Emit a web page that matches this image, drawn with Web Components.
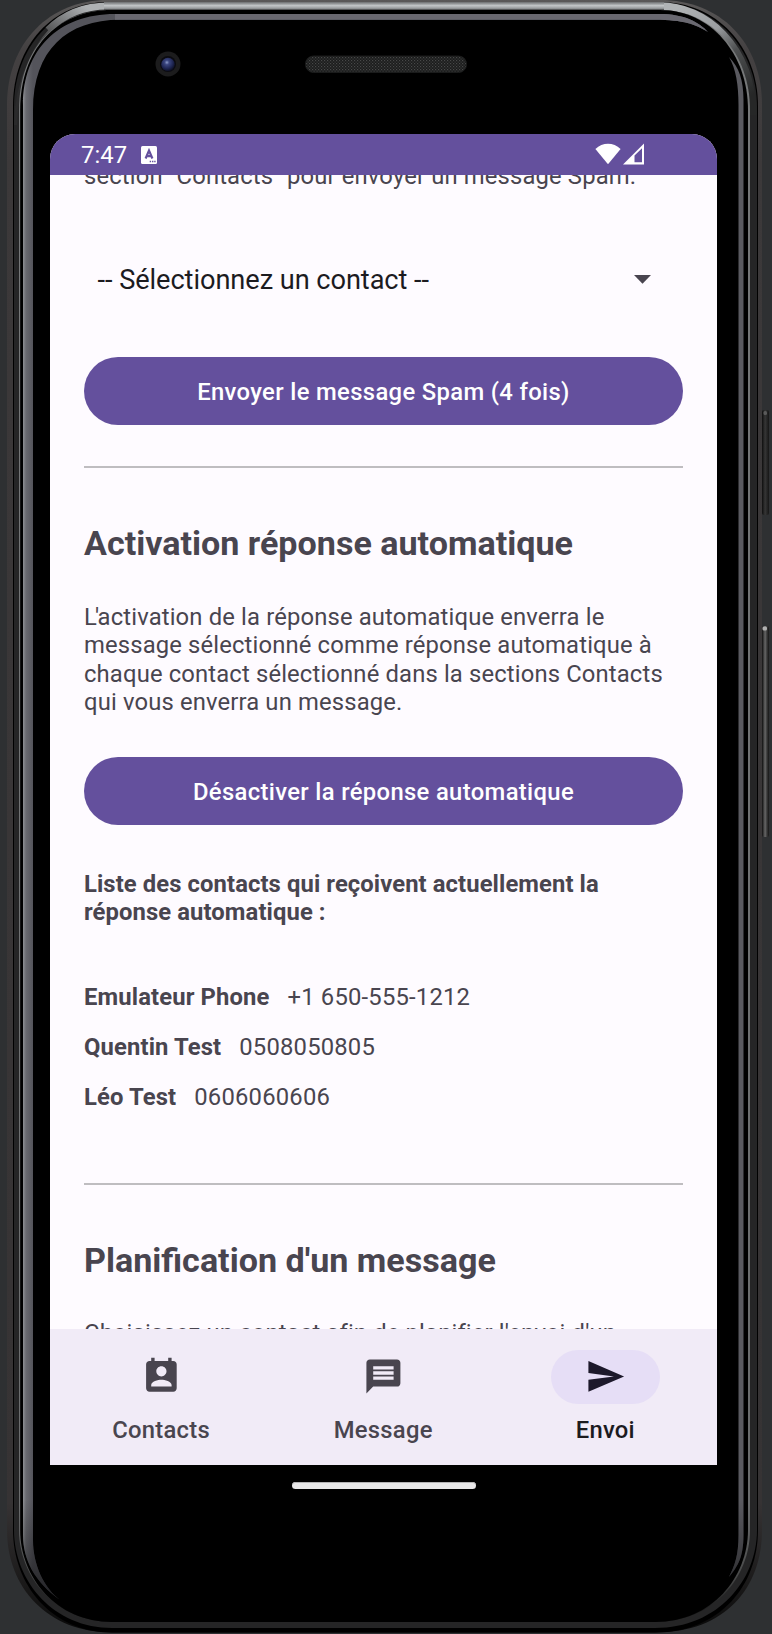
<!DOCTYPE html>
<html lang="fr">
<head>
<meta charset="utf-8">
<title>Envoi</title>
<style>
  html, body { margin: 0; background: #2e3032; }
  body { width: 772px; height: 1634px; overflow: hidden; font-family: Roboto, "Noto Sans", sans-serif; }
  .tight { letter-spacing: -1.7px; }
</style>
</head>
<body>
<phone-device>
  <status-bar slot="status" time="7:47"></status-bar>
  <scroll-page>
    <body-text class="intro">section "Contacts" pour envoyer un message Spam.</body-text>
    <contact-select>-- Sélectionnez un contact --</contact-select>
    <pill-button>Envoyer le message Spam (4 fois)</pill-button>
    <line-divider></line-divider>
    <page-heading>Activation réponse automatique</page-heading>
    <body-text class="para"><span class="tight">L'</span>activation de la réponse automatique enverra le<br>message sélectionné comme réponse automatique à<br>chaque contact sélectionné dans la sections Contacts<br>qui vous enverra un message.</body-text>
    <pill-button class="second">Désactiver la réponse automatique</pill-button>
    <body-text class="list" bold>Liste des contacts qui reçoivent actuellement la<br>réponse automatique :</body-text>
    <contact-row class="first" name="Emulateur Phone">+1 650-555-1212</contact-row>
    <contact-row name="Quentin Test">0508050805</contact-row>
    <contact-row name="Léo Test">0606060606</contact-row>
    <line-divider class="second"></line-divider>
    <page-heading>Planification d'un message</page-heading>
    <body-text class="para last">Choisissez un contact afin de planifier l'envoi d'un</body-text>
  </scroll-page>
  <nav-bar slot="nav">
    <nav-item icon="contacts">Contacts</nav-item>
    <nav-item icon="message">Message</nav-item>
    <nav-item icon="send" active>Envoi</nav-item>
  </nav-bar>
</phone-device>

<script>
const define = (name, html) => {
  const tpl = document.createElement('template');
  tpl.innerHTML = html;
  customElements.define(name, class extends HTMLElement {
    constructor() {
      super();
      this.attachShadow({ mode: 'open' }).append(tpl.content.cloneNode(true));
    }
    connectedCallback() {
      for (const el of this.shadowRoot.querySelectorAll('[data-attr]')) el.textContent = this.getAttribute(el.dataset.attr);
      const icon = this.shadowRoot.querySelector('[data-icon]');
      if (icon) icon.setAttribute('d', ICONS[this.getAttribute('icon')]);
    }
  });
};

const ICONS = {
  contacts: 'M19 3h-1V1h-2v2H8V1H6v2H5c-1.11 0-2 .9-2 2v14c0 1.1.89 2 2 2h14c1.1 0 2-.9 2-2V5c0-1.1-.9-2-2-2zm-7 3c1.66 0 3 1.34 3 3s-1.34 3-3 3-3-1.34-3-3 1.34-3 3-3zm6 12H6v-1c0-2 4-3.1 6-3.1s6 1.1 6 3.1v1z',
  message: 'M20 2H4c-1.1 0-1.99.9-1.99 2L2 22l4-4h14c1.1 0 2-.9 2-2V4c0-1.1-.9-2-2-2zm-2 12H6v-2h12v2zm0-3H6V9h12v2zm0-3H6V6h12v2z',
  send: 'M2.01 21L23 12 2.01 3 2 10l15 2-15 2z'
};

define('phone-device', `
<style>
  :host { display: block; position: relative; width: 772px; height: 1634px; }
  .shell { position: absolute; inset: 0; }
  .screen { position: relative; display: flex; flex-direction: column; padding: 134px 55px 0 50px; }
  .glass { display: flex; flex-direction: column; height: 1331px; border-radius: 25px 25px 0 0; overflow: hidden; background: #fefbff; }
  .home { align-self: center; width: 184px; height: 7px; margin: 17px 0 0; border-radius: 3.5px; background: #e9e8e9; box-shadow: inset 0 1px #b4b3b4; }
</style>
<svg class="shell" width="772" height="1634" viewBox="0 0 772 1634">
  <defs>
    <linearGradient id="edge" x1="0" x2="0" y1="0" y2="1634" gradientUnits="userSpaceOnUse">
      <stop offset="0" stop-color="#5a5858"/><stop offset=".03" stop-color="#444142"/><stop offset=".1" stop-color="#3c393a"/><stop offset=".92" stop-color="#363334"/><stop offset=".97" stop-color="#1a1919"/><stop offset="1" stop-color="#080808"/>
    </linearGradient>
    <linearGradient id="ring" x1="0" x2="0" y1="0" y2="1634" gradientUnits="userSpaceOnUse">
      <stop offset="0" stop-color="#77797a"/><stop offset=".92" stop-color="#6a6c6d"/><stop offset=".965" stop-color="#484949"/><stop offset=".985" stop-color="#1c1c1c"/><stop offset="1" stop-color="#141414"/>
    </linearGradient>
    <linearGradient id="metal" x1="0" x2="0" y1="2" y2="10" gradientUnits="userSpaceOnUse">
      <stop offset="0" stop-color="#6c6e6f"/><stop offset=".45" stop-color="#c2c5c7"/><stop offset=".8" stop-color="#96999b"/><stop offset="1" stop-color="#3a3b3c"/>
    </linearGradient>
    <linearGradient id="arcL" x1="18" y1="100" x2="85" y2="6" gradientUnits="userSpaceOnUse">
      <stop offset="0" stop-color="#2a2a2b"/><stop offset=".6" stop-color="#4b4b4c"/><stop offset=".85" stop-color="#8b8d8f"/><stop offset="1" stop-color="#aeb1b3"/>
    </linearGradient>
    <linearGradient id="arcR" x1="680" y1="6" x2="752" y2="95" gradientUnits="userSpaceOnUse">
      <stop offset="0" stop-color="#b0b3b5"/><stop offset=".35" stop-color="#9b9ea1"/><stop offset=".6" stop-color="#4e5051"/><stop offset="1" stop-color="#262727"/>
    </linearGradient>
    <linearGradient id="side" x1="23" x2="33" y1="0" y2="0" gradientUnits="userSpaceOnUse">
      <stop offset="0" stop-color="#8e9094"/><stop offset=".3" stop-color="#696a70"/><stop offset="1" stop-color="#54545b"/>
    </linearGradient>
    <linearGradient id="fade" x1="0" x2="0" y1="1500" y2="1603" gradientUnits="userSpaceOnUse">
      <stop offset="0" stop-color="#000" stop-opacity="0"/><stop offset="1" stop-color="#000" stop-opacity=".6"/>
    </linearGradient>
    <pattern id="mesh" width="3" height="3" patternUnits="userSpaceOnUse">
      <rect width="3" height="3" fill="#1b1c1c"/><rect width="1.2" height="1.2" fill="#474848"/><rect x="1.500" y="1.500" width="1.2" height="1.2" fill="#3a3b3b"/>
    </pattern>
    <radialGradient id="lens" cx=".42" cy=".35" r=".65">
      <stop offset="0" stop-color="#8d9cc8"/><stop offset=".25" stop-color="#3b4680"/><stop offset=".7" stop-color="#1d2450"/><stop offset="1" stop-color="#0c0e20"/>
    </radialGradient>
    <linearGradient id="vol" x1="0" x2="1" y1="0" y2="0">
      <stop offset="0" stop-color="#0e0e0e"/><stop offset=".45" stop-color="#676767"/><stop offset=".7" stop-color="#3a3a3a"/><stop offset="1" stop-color="#161616"/>
    </linearGradient>
    <linearGradient id="pow" x1="0" x2="1" y1="0" y2="0">
      <stop offset="0" stop-color="#0e0e0e"/><stop offset=".45" stop-color="#363636"/><stop offset="1" stop-color="#161616"/>
    </linearGradient>
  </defs>
  <rect width="772" height="1634" fill="#2e3032"/>
  <rect x="762" y="410" width="7" height="105" rx="2" fill="url(#pow)"/>
  <rect x="763.5" y="411" width="3.5" height="4" rx="1.5" fill="#5a5a5a"/>
  <rect x="762" y="626" width="7" height="211" rx="2" fill="url(#vol)"/>
  <rect x="762.5" y="626.500" width="4.500" height="4" rx="1.5" fill="#b0b0b0"/>
  <path d="M7 105C7 42 50 0 108 0H660C720 0 762 42 762 105V1530C762 1588 725 1632.500 655 1632.500H112C48 1632.500 7 1588 7 1530Z" fill="url(#edge)"/>
  <path d="M13 106C13 46 52 2 108 2H660C716 2 758 46 758 106V1530C758 1585 720 1632.500 655 1632.500H112C52 1632.500 13 1585 13 1530Z" fill="#000"/>
  <path d="M14 107C14 47 54 3 110 3H660C714 3 757 47 757 107V1530C757 1580 718 1628 655 1628H112C54 1628 14 1582 14 1530Z" fill="#252526"/>
  <path d="M15.500 125C16 80 36 40 62 18.500" fill="none" stroke="url(#arcL)" stroke-width="3"/>
  <path d="M48 30C64 14 84 6 108 6" fill="none" stroke="url(#arcL)" stroke-width="7"/>
  <path d="M660 6C705 6 752 45 753 115" fill="none" stroke="url(#arcR)" stroke-width="7.500"/>
  <path d="M19 110C19 49 56 10 112 10H660C712 10 750 53 750 110V1530C750 1577 714 1622 655 1622H112C56 1622 19 1577 19 1530Z" fill="url(#ring)"/>
  <path d="M20.200 110C20.200 50 56 10 112 10H660C710 10 748 53 748 110V1530C748 1577 712 1622 655 1622H112C56 1622 20.200 1577 20.200 1530Z" fill="#000"/>
  <rect x="104" y="2" width="560" height="8" fill="url(#metal)"/>
  <path d="M60 1600C35 1582 23 1560 23 1535V105C23 50 58 14 115 14H660C684 14 699 22 708 32C695 24 684 20 655 19.700H120C67 19.700 33 50 33 110V1540C33 1565 44 1588 60 1600Z" fill="url(#side)"/>
  <path d="M115 14H660C684 14 699 22 708 32C695 24 684 20 655 19.700H115Z" fill="#6a6971"/>
  <path d="M60 1600C35 1582 23 1560 23 1535V1500H33V1540C33 1565 44 1588 60 1600Z" fill="url(#fade)"/>
  <path d="M729 57C739 67 743.500 80 743.500 100V1535C743.500 1557 738 1566 729 1577C735 1565 738.500 1555 738.500 1535V105C738.500 85 736 69 729 57Z" fill="#5a5a60"/>
  <path d="M738.500 1500V1535C738.500 1555 735 1565 729 1577C738 1566 743.500 1557 743.500 1535V1500Z" fill="url(#fade)"/>
  <circle cx="168" cy="64" r="12.500" fill="#1c1c1d"/>
  <circle cx="168" cy="64" r="8" fill="#0b0b10"/>
  <circle cx="168" cy="64.500" r="6.800" fill="url(#lens)"/>
  <rect x="305.500" y="56" width="161" height="16.500" rx="8" fill="url(#mesh)" stroke="#1a1b1b"/>
</svg>
<div class="screen">
  <div class="glass"><slot name="status"></slot><slot></slot><slot name="nav"></slot></div>
  <div class="home"></div>
</div>`);

define('status-bar', `
<style>
  :host { display: flex; flex: none; align-items: flex-start; height: 41px; padding: 7px 73px 0 31px; box-sizing: border-box; background: #64509d; color: #fff; font-size: 23.8px; line-height: 28px; letter-spacing: .1px; }
  .badge { margin: 4.500px 0 0 13.800px; }
  .signals { display: flex; gap: 2px; margin: 2px 0 0 auto; }
</style>
<span data-attr="time"></span>
<svg class="badge" width="16" height="18" viewBox="0 0 16 18"><rect width="16" height="18" rx="1.500" fill="#fff"/><path d="M4.600 12.500L8 4.600L11.400 12.500M5.800 10.200H10.200" fill="none" stroke="#64509d" stroke-width="2.200"/><path d="M8.700 15.500h1.400M11 15.500h1.400M13.200 15.500h1.400" stroke="#64509d" stroke-width="1.400"/></svg>
<div class="signals">
  <svg width="26" height="22" viewBox="0 0 26 22"><path d="M13 21.300L.4 6C4 2.400 8.400.7 13 .7S22 2.400 25.600 6Z" fill="#fff"/></svg>
  <svg width="21" height="22" viewBox="0 0 21 22"><path fill-rule="evenodd" d="M0 21.500L21 .5V21.500ZM11.500 12.600V19.300H19V5.300Z" fill="#fff"/></svg>
</div>`);

define('scroll-page', `
<style>
  :host { display: flex; flex-direction: column; flex: 1; min-height: 0; overflow: hidden; padding: 0 34px; color: #49454f; background: #fefbff; }
  ::slotted(*) { flex: none; }
  ::slotted(.intro) { margin-top: -13px; }
  ::slotted(contact-select) { margin-top: 73.670px; }
  ::slotted(pill-button) { margin-top: 61px; }
  ::slotted(line-divider) { margin: 41px 0 55px; }
  ::slotted(.para) { margin-top: 40px; }
  ::slotted(.last) { margin-top: 39px; }
  ::slotted(pill-button.second) { margin-top: 41.180px; }
  ::slotted(.list) { margin-top: 44.500px; }
  ::slotted(contact-row.first) { margin-top: 45px; }
  ::slotted(line-divider.second) { margin-top: 61px; }
</style>
<slot></slot>`);

define('body-text', `
<style>
  :host { display: block; font-size: 23.8px; line-height: 28.330px; white-space: nowrap; letter-spacing: .15px; }
  :host([bold]) { font-weight: 700; line-height: 28.500px; letter-spacing: .095px; }
</style>
<slot></slot>`);

define('contact-select', `
<style>
  :host { display: flex; align-items: center; height: 32px; padding: 0 32px 0 13.600px; color: #1c1b1f; font-size: 27.200px; line-height: 32px; letter-spacing: -.07px; }
  svg { margin: 0 0 1px auto; }
</style>
<span><slot></slot></span>
<svg width="17" height="9" viewBox="0 0 17 9"><path d="M0 0H17L8.500 8.700Z" fill="#49454f"/></svg>`);

define('pill-button', `
<style>
  :host { display: flex; justify-content: center; height: 68px; padding-top: 21px; box-sizing: border-box; border-radius: 34px; background: #64509d; color: #fff; font-size: 23.8px; font-weight: 500; line-height: 28px; letter-spacing: .35px; white-space: nowrap; }
</style>
<slot></slot>`);

define('line-divider', `
<style>:host { display: block; height: 2px; background: #bfbdc0; }</style>`);

define('page-heading', `
<style>:host { display: block; font-size: 34.080px; font-weight: 700; line-height: 40px; white-space: nowrap; }</style>
<slot></slot>`);

define('contact-row', `
<style>
  :host { display: flex; gap: 18px; height: 50px; padding-top: 11px; box-sizing: border-box; font-size: 23.8px; line-height: 28px; letter-spacing: .2px; white-space: nowrap; }
  b { font-weight: 700; letter-spacing: .13px; }
</style>
<b data-attr="name"></b><span><slot></slot></span>`);

define('nav-bar', `
<style>:host { display: grid; flex: none; grid-template-columns: repeat(3, 1fr); height: 136px; padding-right: .6px; box-sizing: border-box; background: #f1ebf7; }</style>
<slot></slot>`);

define('nav-item', `
<style>
  :host { display: flex; flex-direction: column; align-items: center; padding-top: 21px; color: #49454f; font-size: 23.8px; font-weight: 500; line-height: 28px; letter-spacing: .27px; }
  .pill { display: flex; align-items: center; justify-content: center; width: 108.600px; height: 54px; padding-bottom: 1.500px; box-sizing: border-box; border-radius: 27px; margin-bottom: 12px; }
  :host([active]) { color: #1c1b1f; }
  :host([active]) .pill { background: #e6def6; color: #1d192b; }
</style>
<div class="pill"><svg width="40.800" height="40.800" viewBox="0 0 24 24"><path data-icon fill="currentColor"/></svg></div>
<span><slot></slot></span>`);
</script>
</body>
</html>
